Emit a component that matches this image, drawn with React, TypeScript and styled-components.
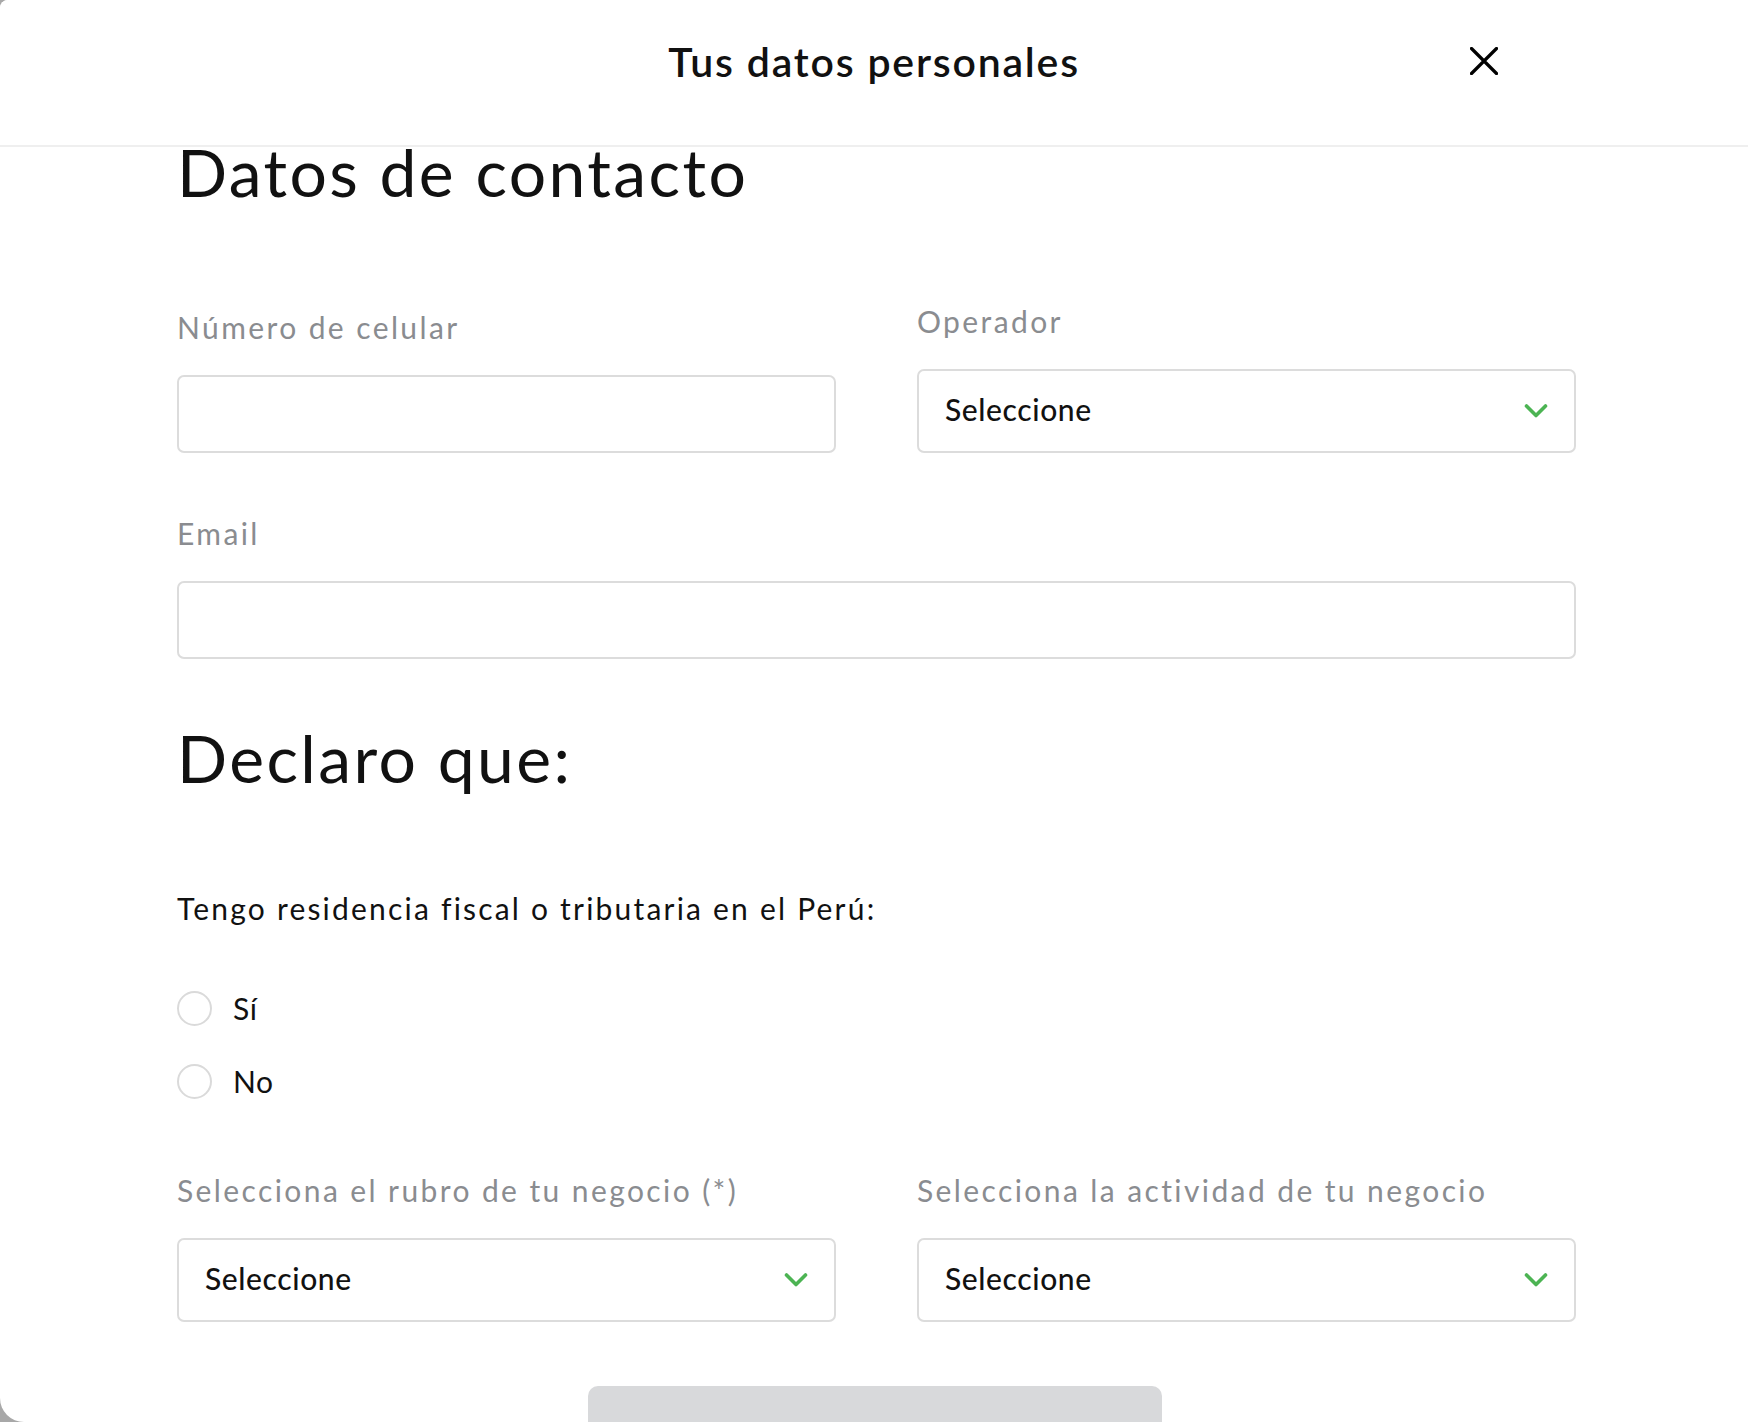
import React from "react";
import styled, { createGlobalStyle } from "styled-components";

const GlobalStyle = createGlobalStyle`
  html, body {
    margin: 0;
    padding: 0;
    background: #a8a8a8;
  }
  body {
    font-family: Lato, "Noto Sans", sans-serif;
    overflow: hidden;
    color: #111;
  }
  * { box-sizing: border-box; }
`;

const Modal = styled.div`
  width: 1748px;
  height: 1422px;
  background: #ffffff;
  border-radius: 8px 0 0 24px;
  overflow: hidden;
  display: flex;
  flex-direction: column;
`;

const Header = styled.header`
  height: 147px;
  flex-shrink: 0;
  border-bottom: 2px solid #efefef;
  display: grid;
  grid-template-columns: 1fr auto 1fr;
  align-items: start;
  padding-top: 37px;
  position: relative;
  z-index: 1;
  background: #fff;
`;

const Title = styled.h1`
  grid-column: 2;
  margin: 0;
  font-size: 41px;
  line-height: 50px;
  font-weight: 600;
  color: #111;
  letter-spacing: 1.8px;
`;

const CloseButton = styled.button`
  grid-column: 3;
  justify-self: end;
  margin: 10px 250px 0 0;
  width: 28px;
  height: 28px;
  padding: 0;
  border: none;
  background: transparent;
  cursor: pointer;
  display: flex;
`;

const Body = styled.main`
  padding: 0 172px 0 177px;
  display: flex;
  flex-direction: column;
`;

const SectionTitle = styled.h2<{ $top: number }>`
  margin: ${(p) => p.$top}px 0 0;
  font-size: 66px;
  line-height: 66px;
  font-weight: 400;
  color: #111;
  letter-spacing: 2.4px;
`;

const FieldRow = styled.div<{ $top: number; $cols?: number }>`
  margin-top: ${(p) => p.$top}px;
  display: grid;
  grid-template-columns: ${(p) => ((p.$cols ?? 2) === 2 ? "1fr 1fr" : "1fr")};
  column-gap: 81px;
  align-items: end;
`;

const Field = styled.div`
  display: flex;
  flex-direction: column;
  gap: 30px;
`;

const Label = styled.label`
  font-size: 30px;
  line-height: 36px;
  font-weight: 400;
  color: #8a8c90;
  letter-spacing: 2.4px;
`;

const TextInput = styled.input`
  height: 78px;
  width: 100%;
  border: 2px solid #dcdcdc;
  border-radius: 7px;
  background: #fff;
  font-family: inherit;
  font-size: 30px;
  padding: 0 26px;
  outline: none;
`;

const SelectBox = styled.button`
  height: 84px;
  width: 100%;
  border: 2px solid #dcdcdc;
  border-radius: 7px;
  background: #fff;
  display: flex;
  align-items: center;
  justify-content: space-between;
  padding: 0 26px 4px;
  font-family: inherit;
  font-size: 30px;
  font-weight: 500;
  letter-spacing: 0.6px;
  color: #111;
  cursor: pointer;
  text-align: left;
`;

const ChevronWrap = styled.span`
  display: flex;
  padding-top: 4px;
`;

const Statement = styled.p<{ $top: number }>`
  margin: ${(p) => p.$top}px 0 0;
  font-size: 30px;
  line-height: 36px;
  font-weight: 400;
  color: #111;
  letter-spacing: 2.2px;
`;

const RadioGroup = styled.div`
  margin-top: 65px;
  display: flex;
  flex-direction: column;
  gap: 38px;
`;

const RadioOption = styled.label`
  display: flex;
  align-items: center;
  gap: 21px;
  font-size: 30px;
  line-height: 35px;
  letter-spacing: 0.5px;
  color: #111;
  cursor: pointer;
`;

const RadioCircle = styled.span`
  width: 35px;
  height: 35px;
  border-radius: 50%;
  border: 2px solid #dadada;
  background: #fff;
  flex-shrink: 0;
`;

const Footer = styled.div`
  margin-top: 64px;
  display: flex;
  justify-content: center;
  padding-right: 3px;
`;

const SubmitButton = styled.button`
  width: 574px;
  height: 72px;
  border: none;
  border-radius: 10px;
  background: #d8d9db;
  font-family: inherit;
  font-size: 30px;
  color: #fff;
`;

const Chevron = () => (
  <svg width="24" height="16" viewBox="0 0 24 16" fill="none">
    <path d="M2.5 3 L12 12.5 L21.5 3" stroke="#4cb453" strokeWidth="3.6" strokeLinecap="round" strokeLinejoin="round" />
  </svg>
);

const CloseIcon = () => (
  <svg width="28" height="28" viewBox="0 0 28 28" fill="none">
    <path d="M1.5 1.5 L26.5 26.5 M26.5 1.5 L1.5 26.5" stroke="#000" strokeWidth="3.2" strokeLinecap="round" />
  </svg>
);

const Select = ({ label }: { label: string }) => (
  <Field>
    <Label>{label}</Label>
    <SelectBox type="button">
      <span>Seleccione</span>
      <ChevronWrap>
        <Chevron />
      </ChevronWrap>
    </SelectBox>
  </Field>
);

export default function App() {
  return (
    <>
      <GlobalStyle />
      <Modal>
        <Header>
          <Title>Tus datos personales</Title>
          <CloseButton type="button" aria-label="Cerrar">
            <CloseIcon />
          </CloseButton>
        </Header>
        <Body>
          <SectionTitle $top={-8}>Datos de contacto</SectionTitle>
          <FieldRow $top={98}>
            <Field>
              <Label>Número de celular</Label>
              <TextInput type="tel" />
            </Field>
            <Select label="Operador" />
          </FieldRow>
          <FieldRow $top={62} $cols={1}>
            <Field>
              <Label>Email</Label>
              <TextInput type="email" />
            </Field>
          </FieldRow>
          <SectionTitle $top={66}>Declaro que:</SectionTitle>
          <Statement $top={99}>Tengo residencia fiscal o tributaria en el Perú:</Statement>
          <RadioGroup>
            <RadioOption>
              <RadioCircle />
              Sí
            </RadioOption>
            <RadioOption>
              <RadioCircle />
              No
            </RadioOption>
          </RadioGroup>
          <FieldRow $top={73}>
            <Select label="Selecciona el rubro de tu negocio (*)" />
            <Select label="Selecciona la actividad de tu negocio" />
          </FieldRow>
          <Footer>
            <SubmitButton type="button" />
          </Footer>
        </Body>
      </Modal>
    </>
  );
}
